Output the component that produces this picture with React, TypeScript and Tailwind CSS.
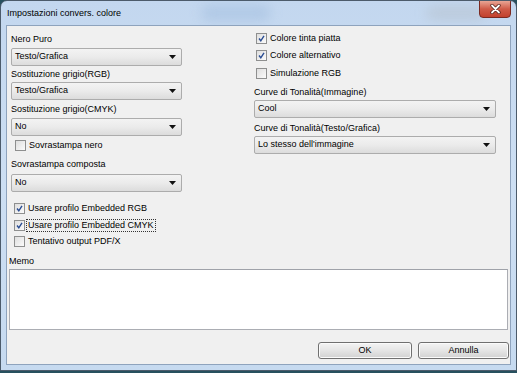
import type { ReactNode } from 'react';

const FONT = { fontFamily: '"Liberation Sans", Arial, sans-serif' };

function Arrow() {
  return (
    <svg width="7" height="4" viewBox="0 0 7 4" className="shrink-0">
      <polygon points="0,0 7,0 3.5,4" fill="#111" />
    </svg>
  );
}

function Select({ value, width }: { value: string; width: string }) {
  return (
    <div
      className={`${width} h-[18px] flex items-center justify-between pl-[3px] pr-[5px] rounded-[2px] border border-[#acacac] bg-gradient-to-b from-[#f3f3f3] via-[#ebebeb] to-[#dcdcdc] text-[9px] text-black`}
    >
      <span>{value}</span>
      <Arrow />
    </div>
  );
}

function Check({ checked, label, focus }: { checked?: boolean; label: string; focus?: boolean }) {
  return (
    <div className="h-[13px] flex items-center gap-[2px]">
      <div className="w-[11px] h-[11px] border border-[#8e8f8f] bg-gradient-to-br from-[#dedede] to-[#fbfbfb] flex items-center justify-center shrink-0">
        {checked && (
          <svg width="9" height="9" viewBox="0 0 9 9">
            <path d="M2 4.5 L3.8 6.8 L7 1.8" stroke="#2b4e94" strokeWidth="1.4" fill="none" />
          </svg>
        )}
      </div>
      <span
        className={`text-[9px] leading-[11px] px-[1px] text-black ${focus ? 'outline outline-1 outline-dotted outline-[#333]' : ''}`}
      >
        {label}
      </span>
    </div>
  );
}

function Label({ children, className = '' }: { children: ReactNode; className?: string }) {
  return <div className={`h-[12px] leading-[12px] text-[9px] text-black ${className}`}>{children}</div>;
}

function Button({ label, width }: { label: string; width: string }) {
  return (
    <div
      className={`${width} h-[17px] flex items-center justify-center rounded-[3px] border border-[#707070] bg-gradient-to-b from-[#f4f4f4] via-[#e5e5e5] to-[#d2d2d2] text-[9px] text-black shadow-[inset_0_0_0_1px_#fbfbfb]`}
    >
      {label}
    </div>
  );
}

export default function App() {
  return (
    <div className="w-[517px] h-[373px] bg-[#27505e] overflow-hidden" style={FONT}>
      <div className="relative w-[517px] h-[371px] border border-[#4c5b6b] rounded-t-[7px] bg-gradient-to-b from-[#c3d7ef] via-[#cddff3] to-[#c6daf0] flex flex-col overflow-hidden">
        {/* glass blotches */}
        <div className="absolute left-[200px] top-[4px] w-[70px] h-[16px] rounded-full bg-[#a9c3e2] blur-[6px] opacity-70" />
        <div className="absolute left-[425px] top-[5px] w-[60px] h-[14px] rounded-full bg-[#b8c5d3] blur-[6px] opacity-70" />

        {/* title bar */}
        <div className="relative h-[24px] flex items-center pl-[6px] pt-[1px]">
          <span className="text-[9px] text-black">Impostazioni convers. colore</span>
          <div className="absolute right-[5px] top-[-1px] w-[32px] h-[18px] rounded-b-[4px] border border-[#7b2a22] bg-gradient-to-b from-[#e8a595] via-[#cf5b48] to-[#c2412e] flex items-center justify-center">
            <svg width="11" height="10" viewBox="0 0 11 10">
              <path d="M2 1.5 L9 8.5 M9 1.5 L2 8.5" stroke="#4a1a14" strokeWidth="3.2" strokeLinecap="round" />
              <path d="M2 1.5 L9 8.5 M9 1.5 L2 8.5" stroke="#fff" strokeWidth="1.8" strokeLinecap="round" />
            </svg>
          </div>
        </div>

        {/* client area */}
        <div className="relative mx-[5px] h-[340px] border border-[#8ea3bd] bg-[#f0f0f0] flex flex-col">
          <div className="flex">
            {/* left column */}
            <div className="ml-[4px] w-[171px] flex flex-col">
              <Label className="mt-[7px]">Nero Puro</Label>
              <div className="mt-[3px]"><Select value="Testo/Grafica" width="w-[171px]" /></div>
              <Label className="mt-[2px]">Sostituzione grigio(RGB)</Label>
              <div className="mt-[2px]"><Select value="Testo/Grafica" width="w-[171px]" /></div>
              <Label className="mt-[3px]">Sostituzione grigio(CMYK)</Label>
              <div className="mt-[3px]"><Select value="No" width="w-[171px]" /></div>
              <div className="mt-[3px] pl-[4px]"><Check label="Sovrastampa nero" /></div>
              <Label className="mt-[6px]">Sovrastampa composta</Label>
              <div className="mt-[4px]"><Select value="No" width="w-[171px]" /></div>
              <div className="mt-[10px] pl-[3px]"><Check checked label="Usare profilo Embedded RGB" /></div>
              <div className="mt-[4px] pl-[3px]"><Check checked focus label="Usare profilo Embedded CMYK" /></div>
              <div className="mt-[3px] pl-[3px]"><Check label="Tentativo output PDF/X" /></div>
            </div>

            {/* right column */}
            <div className="ml-[72px] w-[242px] flex flex-col">
              <div className="mt-[6px] pl-[2px]"><Check checked label="Colore tinta piatta" /></div>
              <div className="mt-[4px] pl-[2px]"><Check checked label="Colore alternativo" /></div>
              <div className="mt-[5px] pl-[2px]"><Check label="Simulazione RGB" /></div>
              <Label className="mt-[6px]">Curve di Tonalità(Immagine)</Label>
              <div className="mt-[2px]"><Select value="Cool" width="w-[242px]" /></div>
              <Label className="mt-[4px]">Curve di Tonalità(Testo/Grafica)</Label>
              <div className="mt-[2px]"><Select value="Lo stesso dell'immagine" width="w-[242px]" /></div>
            </div>
          </div>

          {/* memo */}
          <div className="mx-[2px] flex flex-col">
            <Label className="mt-[7px]">Memo</Label>
            <div className="mt-[2px] h-[61px] w-[499px] border border-[#abadb3] border-t-[#9fa2a9] bg-white" />
          </div>

          {/* buttons */}
          <div className="mt-[12px] flex justify-end gap-[6px] pr-[1px]">
            <Button label="OK" width="w-[94px]" />
            <Button label="Annulla" width="w-[91px]" />
          </div>
        </div>
      </div>
    </div>
  );
}
